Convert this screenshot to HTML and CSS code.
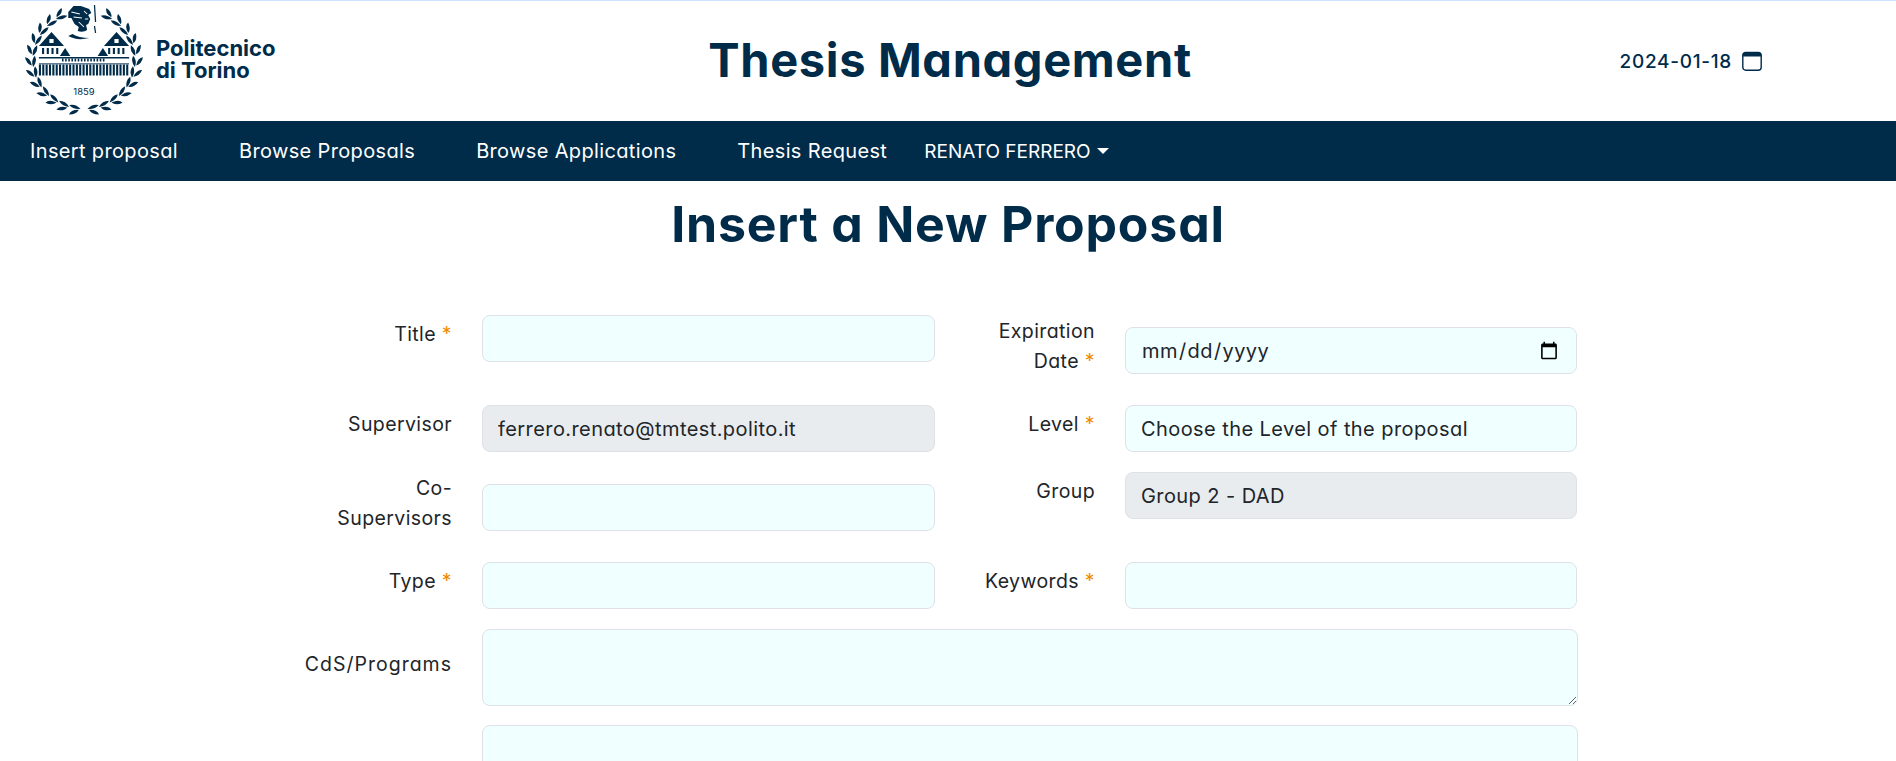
FILE: index.html
```html
<!DOCTYPE html>
<html lang="en">
<head>
    <meta charset="UTF-8">
    <title>Thesis Management</title>
    <link rel="stylesheet" href="styles.css">
</head>
<body>

<header class="top-header">
    <div class="brand">
        <svg class="brand-logo" viewBox="0 0 122 112" width="128" height="112" preserveAspectRatio="none" aria-hidden="true">
            <defs>
                <g id="leaf">
                    <path d="M61.5 5 q2-5 9-5.500 q-1 5-9 5.500z"/>
                    <path d="M60 6 q5 5 11 3 q-4-4.500-11-3z"/>
                </g>
                <g id="branch">
                    <use href="#leaf" transform="rotate(-32 61 55)"/>
                    <use href="#leaf" transform="rotate(-45 61 55)"/>
                    <use href="#leaf" transform="rotate(-58 61 55)"/>
                    <use href="#leaf" transform="rotate(-71 61 55)"/>
                    <use href="#leaf" transform="rotate(-84 61 55)"/>
                    <use href="#leaf" transform="rotate(-97 61 55)"/>
                    <use href="#leaf" transform="rotate(-110 61 55)"/>
                    <use href="#leaf" transform="rotate(-123 61 55)"/>
                    <use href="#leaf" transform="rotate(-136 61 55)"/>
                    <use href="#leaf" transform="rotate(-149 61 55)"/>
                    <use href="#leaf" transform="rotate(-162 61 55)"/>
                    <use href="#leaf" transform="rotate(-175 61 55)"/>
                </g>
            </defs>
            <use href="#branch"/>
            <use href="#branch" transform="translate(122 0) scale(-1 1)"/>
            <!-- head -->
            <path d="M46 7 l5-6 l7 0 l8 3 l2 4 l-3 2 l2 4 l-2 5 l-2 1 l1 5 q-4 3-9 1 l1-4 l-4-3 l-3-6 l-3 0z"/>
            <path d="M49 7 l8 2 M51 12 l8 1 M56 17 l5 5 M61 6 l3 3 M62 14 l3 0" fill="none" stroke="#fff" stroke-width="1"/>
            <path d="M46 31 q8 5 20 2 q-10 0-16-4z"/>
            <path d="M71 0 l1 17 M71 21 l1 7" fill="none" stroke="#002b49" stroke-width="1.200"/>
            <!-- building -->
            <path d="M30 27 l-12 14 h24z M92 27 l-12 14 h24z M43 43 l-5 8 h10z M79 43 l-5 8 h10z"/>
            <path d="M28 34 h4 v4 h-4z M90 34 h4 v4 h-4z" fill="#fff"/>
            <line x1="21" y1="46" x2="38" y2="46" stroke="#002b49" stroke-width="6" stroke-dasharray="2 2.500"/>
            <line x1="84" y1="46" x2="101" y2="46" stroke="#002b49" stroke-width="6" stroke-dasharray="2 2.500"/>
            <rect x="18" y="52" width="86" height="1.500"/>
            <line x1="40" y1="55" x2="82" y2="55" stroke="#002b49" stroke-width="3" stroke-dasharray="1.500 1.500"/>
            <line x1="18" y1="65" x2="104" y2="65" stroke="#002b49" stroke-width="11" stroke-dasharray="2 1.200"/>
            <rect x="18" y="58" width="86" height="1.500" opacity="0.600"/>
            <text class="logo-year" x="61" y="90" text-anchor="middle">1859</text>
        </svg>
        <div class="brand-name">Politecnico<br>di Torino</div>
    </div>
    <div class="site-title">Thesis Management</div>
    <div class="today">
        <span>2024-01-18</span>
        <svg width="20" height="20" viewBox="0 0 20 20" aria-hidden="true">
            <rect x="0.800" y="1.500" width="18.400" height="17.700" rx="3" fill="none" stroke="#002b49" stroke-width="1.400"/>
            <path d="M3.500 1.500h13a2.800 2.800 0 0 1 2.700 2.800v1.200H.8V4.300a2.800 2.800 0 0 1 2.700-2.800z" fill="#002b49"/>
        </svg>
    </div>
</header>

<nav class="main-nav">
    <a href="#">Insert proposal</a>
    <a href="#">Browse Proposals</a>
    <a href="#">Browse Applications</a>
    <a href="#">Thesis Request</a>
    <a href="#" class="nav-user">RENATO FERRERO</a>
</nav>

<main>
    <h1>Insert a New Proposal</h1>

    <form class="proposal-form">
        <div class="form-row row-first">
            <div class="field">
                <label for="title">Title <span class="req">*</span></label>
                <input type="text" id="title" required>
            </div>
            <div class="field">
                <label for="expiration" class="two-lines">Expiration Date <span class="req">*</span></label>
                <input type="date" id="expiration" class="pushed" required>
            </div>
        </div>

        <div class="form-row row-second">
            <div class="field">
                <label for="supervisor">Supervisor</label>
                <input type="text" id="supervisor" value="ferrero.renato@tmtest.polito.it" disabled>
            </div>
            <div class="field">
                <label for="level">Level <span class="req">*</span></label>
                <select id="level" required>
                    <option>Choose the Level of the proposal</option>
                </select>
            </div>
        </div>

        <div class="form-row row-third">
            <div class="field">
                <label for="cosupervisors" class="two-lines">Co-Supervisors</label>
                <input type="text" id="cosupervisors" class="pushed">
            </div>
            <div class="field">
                <label for="group">Group</label>
                <input type="text" id="group" value="Group 2 - DAD" disabled>
            </div>
        </div>

        <div class="form-row row-fourth">
            <div class="field">
                <label for="type">Type <span class="req">*</span></label>
                <input type="text" id="type" required>
            </div>
            <div class="field">
                <label for="keywords">Keywords <span class="req">*</span></label>
                <input type="text" id="keywords" required>
            </div>
        </div>

        <div class="field field-wide row-programs">
            <label for="programs">CdS/Programs</label>
            <textarea id="programs"></textarea>
        </div>

        <div class="field field-wide">
            <label for="description"></label>
            <textarea id="description" class="tall"></textarea>
        </div>
    </form>
</main>

</body>
</html>
```

FILE: styles.css
```css
html, body { height: 100%; overflow: hidden; }
body {
    margin: 0;
    font-family: Inter, "Noto Sans", sans-serif;
    font-feature-settings: "cv11";
    color: #212529;
    background-color: #fff;
}

.top-header {
    height: 120px;
    border-top: 1px solid #cfe2ff;
    display: grid;
    grid-template-columns: 1fr auto 1fr;
    align-items: center;
}
.brand { display: flex; align-items: center; gap: 8px; padding-left: 20px; }
.brand-logo { fill: #002b49; flex: none; }
.logo-year { font-size: 9px; fill: #002b49; }
.brand-name {
    font-size: 22px;
    font-weight: 700;
    line-height: 22px;
    color: #002b49;
    padding-bottom: 4px;
}
.site-title {
    font-size: 47px;
    font-weight: 700;
    letter-spacing: 0.65px;
    color: #002b49;
    padding: 0 0 4px 4px;
}
.today {
    display: flex;
    justify-content: flex-end;
    align-items: center;
    gap: 10px;
    padding-right: 134px;
    font-size: 19px;
    font-weight: 500;
    letter-spacing: 0.7px;
    color: #002b49;
}

.main-nav {
    height: 60px;
    background-color: #002b49;
    display: flex;
    align-items: center;
    padding-left: 30px;
    gap: 61px;
}
.main-nav a {
    color: #fff;
    text-decoration: none;
    font-size: 20px;
    letter-spacing: 0.35px;
}
.main-nav a.nav-user {
    margin-left: -24px;
    display: flex;
    align-items: center;
    gap: 6px;
    font-size: 19px;
    letter-spacing: 0;
}
.nav-user::after {
    content: "";
    border-top: 6px solid #fff;
    border-left: 6px solid transparent;
    border-right: 6px solid transparent;
}

h1 {
    margin: 10px 0 0;
    text-align: center;
    font-size: 50px;
    line-height: 66px;
    font-weight: 700;
    letter-spacing: 0.8px;
    color: #002b49;
}

.proposal-form {
    width: 1276px;
    margin: 58px 0 0 302px;
}
.form-row {
    display: grid;
    grid-template-columns: 633px 612px;
    column-gap: 30px;
    align-items: start;
}
.form-row .field:first-child { padding-left: 20px; }
.row-first { margin-bottom: 29px; }
.row-second { margin-bottom: 20px; }
.row-third { margin-bottom: 29px; }
.row-fourth { margin-bottom: 20px; }
.row-programs { margin-bottom: 19px; }

.field { display: flex; gap: 30px; justify-content: flex-end; align-items: flex-start; }
.field label {
    width: 130px;
    flex: none;
    text-align: right;
    font-size: 19.5px;
    letter-spacing: 0.4px;
    line-height: 30px;
    padding-top: 4px;
}
.field label.two-lines { padding-top: 1px; }
.field-wide label { width: 150px; padding-top: 20px; letter-spacing: 1px; }
.req { color: #f18a00; }

input, select, textarea {
    box-sizing: border-box;
    width: 100%;
    min-width: 0;
    height: 47px;
    padding: 0 15px;
    font-family: inherit;
    font-feature-settings: inherit;
    font-size: 20px;
    letter-spacing: 0.42px;
    color: #212529;
    background-color: #f0ffff;
    border: 1px solid #dee2e6;
    border-radius: 8px;
    outline: none;
}
select { appearance: none; }
input:disabled { background-color: #e9ecef; opacity: 1; color: #212529; }
input.pushed { margin-top: 12px; }
textarea {
    width: 1096px;
    height: 77px;
    flex: none;
    display: block;
}
textarea.tall { height: 120px; }
```
